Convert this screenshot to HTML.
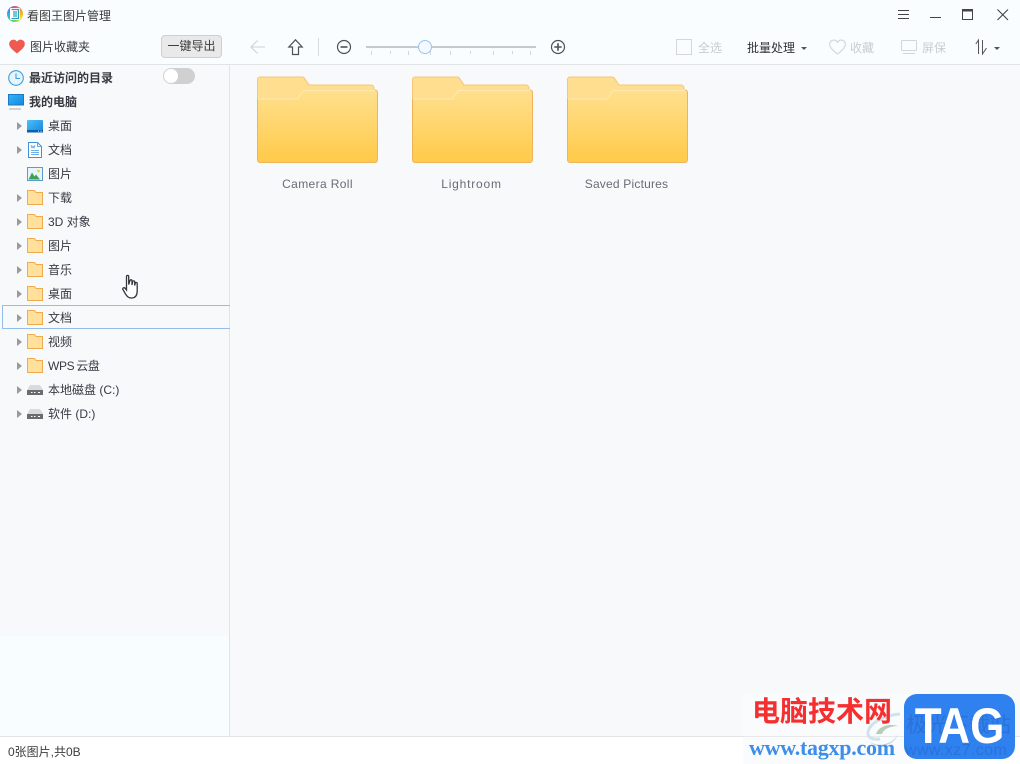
<!DOCTYPE html>
<html lang="zh">
<head>
<meta charset="utf-8">
<title>看图王图片管理</title>
<style>
html,body{margin:0;padding:0;}
body{width:1020px;height:764px;overflow:hidden;position:relative;background:#f9fdff;font-family:"Liberation Sans","Noto Sans CJK SC",sans-serif;font-size:12px;color:#333;}
.a{position:absolute;}
.t{position:absolute;white-space:nowrap;line-height:16px;font-size:12px;}
svg{position:absolute;overflow:visible;}
.row{position:absolute;left:0;width:229px;height:24px;}
.row .arr{position:absolute;left:17px;top:8px;width:0;height:0;border-left:5px solid #9a9a9a;border-top:4px solid transparent;border-bottom:4px solid transparent;}
.row .lb{position:absolute;left:48px;top:4px;line-height:16px;white-space:nowrap;color:#363b42;}
.row svg{left:27px;top:4px;}
.name{position:absolute;top:176px;width:121px;text-align:center;font-size:12px;line-height:16px;color:#666c75;}
.gr{color:#c9ccd0;}
</style>
</head>
<body>
<!-- backgrounds -->
<div class="a" style="left:0;top:65px;width:1020px;height:672px;background:#f8f9fb;"></div>
<div class="a" style="left:0;top:64px;width:1020px;height:1px;background:#e1e4e7;"></div>
<div class="a" style="left:0;top:636px;width:229px;height:100px;background:#f8fdff;"></div>
<div class="a" style="left:229px;top:65px;width:1px;height:671px;background:#dce5ea;"></div>
<div class="a" style="left:0;top:736px;width:1020px;height:28px;background:#fff;border-top:1px solid #e2e4e7;box-sizing:border-box;"></div>

<!-- title bar -->
<div class="a" style="left:7px;top:6px;width:16px;height:16px;border-radius:50%;background:conic-gradient(#f04a8a 0deg,#f5a623 70deg,#f7e02f 130deg,#55c66a 200deg,#25b5e8 270deg,#7a5fd8 320deg,#f04a8a 360deg);"></div>
<div class="a" style="left:10px;top:8px;width:10px;height:12px;background:#fff;border-radius:1px;"></div>
<svg width="10" height="12" style="left:10px;top:8px" viewBox="0 0 10 12"><path d="M1.500 1.500H8.500V10.500H1.500M3 4H7M3 6H7M3 8H7" fill="none" stroke="#2a9fb8" stroke-width="1.300"/></svg>
<div class="t" style="left:27px;top:8px;color:#3c3c3c;">看图王图片管理</div>

<svg width="12" height="10" style="left:898px;top:10px"><path d="M0 .5h11M0 4.500h11M0 8.500h11" stroke="#444" stroke-width="1"/></svg>
<svg width="12" height="3" style="left:930px;top:17px"><path d="M0 .5h11" stroke="#444" stroke-width="1"/></svg>
<svg width="13" height="12" style="left:961px;top:9px"><rect x="1.500" y=".5" width="10" height="10" fill="none" stroke="#444"/><path d="M1 1.500h11" stroke="#444" stroke-width="2"/></svg>
<svg width="12" height="12" style="left:997px;top:9px"><path d="M.5.500l10.500 10.500M11 .5L.5 11" stroke="#444" stroke-width="1.100"/></svg>

<!-- toolbar left -->
<svg width="17" height="15" style="left:9px;top:39px" viewBox="0 0 17 15"><path d="M8 14.500C3 10.500.2 8 .2 5A4.200 4.200 0 0 1 4.400 .6C6 .6 7.300 1.500 8 2.700 8.700 1.500 10 .6 11.600 .6A4.200 4.200 0 0 1 15.800 5C15.800 8 13 10.500 8 14.500Z" fill="#ee5a50"/></svg>
<div class="t" style="left:30px;top:39px;color:#3c3c3c;">图片收藏夹</div>
<div class="a" style="left:161px;top:35px;width:61px;height:23px;box-sizing:border-box;background:#e9e9e9;border:1px solid #cfcfcf;border-radius:4px;text-align:center;line-height:21px;color:#3c3c3c;">一键导出</div>

<!-- toolbar middle -->
<svg width="16" height="14" style="left:250px;top:40px"><path d="M15 7H1M7.500.500L1 7l6.500 6.500" fill="none" stroke="#cdd0d4" stroke-width="1"/></svg>
<svg width="16" height="17" style="left:288px;top:39px"><path d="M7.500.800L.800 8H4.500v7.500h6V8h3.700Z" fill="none" stroke="#4c5157" stroke-width="1.200"/></svg>
<div class="a" style="left:318px;top:38px;width:1px;height:18px;background:#d8dadd;"></div>
<svg width="16" height="16" style="left:336px;top:39px"><circle cx="8" cy="8" r="6.500" fill="none" stroke="#4c5157" stroke-width="1.200"/><path d="M4.500 8h7" stroke="#4c5157" stroke-width="1.600"/></svg>
<div class="a" style="left:366px;top:46px;width:170px;height:2px;background:#c8c9cb;"></div>
<svg width="170" height="6" style="left:366px;top:51px"><path d="M5.500 0v4M24.500 0v3M42.500 0v4M64.500 0v4M84.500 0v4M104.500 0v3M127.500 0v4M146.500 0v3M164.500 0v4" stroke="#d4d6d8" stroke-width="1"/></svg>
<div class="a" style="left:418px;top:40px;width:14px;height:14px;box-sizing:border-box;border-radius:50%;background:#f4f9ff;border:1px solid #9cc4ee;"></div>
<svg width="16" height="16" style="left:550px;top:39px"><circle cx="8" cy="8" r="6.500" fill="none" stroke="#4c5157" stroke-width="1.200"/><path d="M4.300 8h7.400M8 4.300v7.400" stroke="#4c5157" stroke-width="1.600"/></svg>

<!-- toolbar right -->
<div class="a" style="left:676px;top:39px;width:16px;height:16px;box-sizing:border-box;border:1px solid #d4d6d8;"></div>
<div class="t gr" style="left:698px;top:40px;">全选</div>
<div class="t" style="left:747px;top:40px;color:#333;">批量处理</div>
<div class="a" style="left:801px;top:47px;width:0;height:0;border-top:3px solid #555;border-left:3px solid transparent;border-right:3px solid transparent;"></div>
<svg width="17" height="16" style="left:829px;top:39px" viewBox="0 0 17 16"><path d="M8.500 15C3.500 11 .7 8.500.7 5.200A4 4 0 0 1 4.700 1.100C6.200 1.100 7.700 2 8.500 3.300 9.300 2 10.800 1.100 12.300 1.100A4 4 0 0 1 16.300 5.200C16.300 8.500 13.500 11 8.500 15Z" fill="none" stroke="#d2d4d7" stroke-width="1.100"/></svg>
<div class="t gr" style="left:850px;top:40px;">收藏</div>
<svg width="16" height="15" style="left:901px;top:40px"><rect x=".5" y=".5" width="15" height="10" rx="1" fill="none" stroke="#d2d4d7"/><path d="M2 13.500h12" stroke="#d2d4d7"/></svg>
<div class="t gr" style="left:922px;top:40px;">屏保</div>
<svg width="13" height="16" style="left:975px;top:39px"><path d="M3.500 15V1L.8 5M7.500 1v14l4-6" fill="none" stroke="#555" stroke-width="1"/></svg>
<div class="a" style="left:994px;top:47px;width:0;height:0;border-top:3px solid #555;border-left:3px solid transparent;border-right:3px solid transparent;"></div>

<!-- sidebar -->
<svg width="16" height="16" style="left:8px;top:70px"><circle cx="8" cy="8" r="7.300" fill="#e6f4fd" stroke="#3a9fe0" stroke-width="1.100"/><path d="M8 3.500V8.500H12" fill="none" stroke="#3a9fe0" stroke-width="1.100"/></svg>
<div class="t" style="left:29px;top:70px;font-weight:bold;color:#363b42;">最近访问的目录</div>
<div class="a" style="left:163px;top:68px;width:32px;height:16px;border-radius:8px;background:#d0d0d0;"></div>
<div class="a" style="left:164px;top:69px;width:14px;height:14px;border-radius:50%;background:#fff;"></div>

<svg width="16" height="16" style="left:8px;top:94px"><defs><linearGradient id="sc" x1="0" y1="0" x2="1" y2="1"><stop offset="0" stop-color="#35b4f5"/><stop offset="1" stop-color="#1288e0"/></linearGradient></defs><rect x=".5" y=".5" width="15" height="10.500" fill="url(#sc)" stroke="#1a78c5" stroke-width="1"/><rect x="1" y="14" width="12" height="2" fill="#d0d3d6"/></svg>
<div class="t" style="left:29px;top:94px;font-weight:bold;color:#363b42;">我的电脑</div>

<div class="row" style="top:114px"><i class="arr"></i>
<svg width="16" height="13" style="left:27px;top:6px"><defs><linearGradient id="dk" x1="0" y1="0" x2="1" y2="1"><stop offset="0" stop-color="#4cc0f8"/><stop offset="1" stop-color="#1285e0"/></linearGradient></defs><rect width="16" height="12.500" rx="1" fill="url(#dk)"/><rect y="10" width="16" height="2.500" fill="#0d5fa8"/><path d="M11 11.200h1M13.500 11.200h1" stroke="#fff" stroke-width=".8"/></svg>
<span class="lb">桌面</span></div>

<div class="row" style="top:138px"><i class="arr"></i>
<svg width="15" height="17" style="left:28px;top:4px"><path d="M.5.500H9.500L13.500 4.500V15.500H.5Z" fill="#fff" stroke="#3f93dd"/><path d="M9.500 .5V4.500h4M3 8.500h8M3 10.500h8M3 12.500h8" fill="none" stroke="#3f93dd" stroke-width=".8"/><path d="M3 3l1 3 1-2 1 2 1-3" fill="none" stroke="#3f93dd" stroke-width=".7"/></svg>
<span class="lb">文档</span></div>

<div class="row" style="top:162px">
<svg width="16" height="14" style="left:27px;top:5px"><rect x=".5" y=".5" width="15" height="13" fill="#e6f4fb" stroke="#5c9cc9"/><path d="M1.500 12.500L5 5.500l2.500 4 1.500-2 4 5Z" fill="#3f9e58"/><circle cx="11.500" cy="4" r="1.300" fill="#f5c33b"/></svg>
<span class="lb">图片</span></div>

<div class="row" style="top:186px"><i class="arr"></i><svg width="16" height="15" viewBox="0 0 16 15"><path d="M.5 14.500V.5H7.500L9 2.500H15.500V14.500Z" fill="#ffe19c" stroke="#f2aa51"/></svg><span class="lb">下载</span></div>
<div class="row" style="top:210px"><i class="arr"></i><svg width="16" height="15" viewBox="0 0 16 15"><path d="M.5 14.500V.5H7.500L9 2.500H15.500V14.500Z" fill="#ffe19c" stroke="#f2aa51"/></svg><span class="lb">3D 对象</span></div>
<div class="row" style="top:234px"><i class="arr"></i><svg width="16" height="15" viewBox="0 0 16 15"><path d="M.5 14.500V.5H7.500L9 2.500H15.500V14.500Z" fill="#ffe19c" stroke="#f2aa51"/></svg><span class="lb">图片</span></div>
<div class="row" style="top:258px"><i class="arr"></i><svg width="16" height="15" viewBox="0 0 16 15"><path d="M.5 14.500V.5H7.500L9 2.500H15.500V14.500Z" fill="#ffe19c" stroke="#f2aa51"/></svg><span class="lb">音乐</span></div>
<div class="row" style="top:282px"><i class="arr"></i><svg width="16" height="15" viewBox="0 0 16 15"><path d="M.5 14.500V.5H7.500L9 2.500H15.500V14.500Z" fill="#ffe19c" stroke="#f2aa51"/></svg><span class="lb">桌面</span></div>
<div class="a" style="left:2px;top:305px;width:228px;height:24px;box-sizing:border-box;border:1px solid #94bdea;border-right:none;"></div>
<div class="row" style="top:306px"><i class="arr"></i><svg width="16" height="15" viewBox="0 0 16 15"><path d="M.5 14.500V.5H7.500L9 2.500H15.500V14.500Z" fill="#ffe19c" stroke="#f2aa51"/></svg><span class="lb">文档</span></div>
<div class="row" style="top:330px"><i class="arr"></i><svg width="16" height="15" viewBox="0 0 16 15"><path d="M.5 14.500V.5H7.500L9 2.500H15.500V14.500Z" fill="#ffe19c" stroke="#f2aa51"/></svg><span class="lb">视频</span></div>
<div class="row" style="top:354px"><i class="arr"></i><svg width="16" height="15" viewBox="0 0 16 15"><path d="M.5 14.500V.5H7.500L9 2.500H15.500V14.500Z" fill="#ffe19c" stroke="#f2aa51"/></svg><span class="lb" style="word-spacing:-1px;letter-spacing:-.35px;">WPS 云盘</span></div>

<div class="row" style="top:378px"><i class="arr"></i>
<svg width="16" height="11" style="left:27px;top:7px"><path d="M3 0H13L16 5V10H0V5Z" fill="#d8dadc"/><rect y="5" width="16" height="5" fill="#6a6c6f"/><path d="M4 7.500h1.500M7 7.500h1.500M11 7.500h2" stroke="#fff" stroke-width="1"/></svg>
<span class="lb">本地磁盘&nbsp;(C:)</span></div>
<div class="row" style="top:402px"><i class="arr"></i>
<svg width="16" height="11" style="left:27px;top:7px"><path d="M3 0H13L16 5V10H0V5Z" fill="#d8dadc"/><rect y="5" width="16" height="5" fill="#6a6c6f"/><path d="M4 7.500h1.500M7 7.500h1.500M11 7.500h2" stroke="#fff" stroke-width="1"/></svg>
<span class="lb">软件&nbsp;(D:)</span></div>

<!-- cursor -->
<svg width="18" height="26" style="left:122px;top:274px" viewBox="0 0 18 26"><path d="M4.500 2.500C4.500 1 6.700 1 6.700 2.500V10.500L8 6.500C8.300 5.500 10 5.600 10 6.800V11L10.700 7.500C11 6.500 12.700 6.700 12.700 7.900V11.500L13.300 9C13.600 8.100 15.200 8.300 15.200 9.500V17C15.200 21 13.500 23.700 10 24 6.500 24.200 5.200 22.500 3.500 20L.9 15.500C.2 14.100 2 13.100 3.100 14.200L4.500 16Z" fill="#fff" stroke="#33383d" stroke-width="1.300"/></svg>

<!-- folders -->
<svg width="0" height="0" style="left:0;top:0"><defs>
<linearGradient id="fg" x1="0" y1="0" x2="0" y2="1"><stop offset="0" stop-color="#ffe08f"/><stop offset=".85" stop-color="#ffcd52"/><stop offset="1" stop-color="#ffcb4c"/></linearGradient>
</defs></svg>
<svg width="122" height="88" style="left:257px;top:76px" viewBox="0 0 122 88"><path d="M.5 3.500A2.500 2.500 0 0 1 3 1H45.500C46.500 1 47 1.500 47.500 2.300L52 9H114A3 3 0 0 1 117 12V30H.5Z" fill="#ffde90" stroke="#f4c77a"/><path d="M.5 23H40.500L46 14H118A2.500 2.500 0 0 1 120.500 16.500V84A2.500 2.500 0 0 1 118 86.500H3A2.500 2.500 0 0 1 .5 84Z" fill="url(#fg)"/><path d="M.5 23V84A2.500 2.500 0 0 0 3 86.500H118A2.500 2.500 0 0 0 120.500 84V16.500A2.500 2.500 0 0 0 118 14" fill="none" stroke="#eeb45c"/><path d="M1 23H40.500L46 14.500H118" fill="none" stroke="#ffeab0"/></svg>
<svg width="122" height="88" style="left:412px;top:76px" viewBox="0 0 122 88"><path d="M.5 3.500A2.500 2.500 0 0 1 3 1H45.500C46.500 1 47 1.500 47.500 2.300L52 9H114A3 3 0 0 1 117 12V30H.5Z" fill="#ffde90" stroke="#f4c77a"/><path d="M.5 23H40.500L46 14H118A2.500 2.500 0 0 1 120.500 16.500V84A2.500 2.500 0 0 1 118 86.500H3A2.500 2.500 0 0 1 .5 84Z" fill="url(#fg)"/><path d="M.5 23V84A2.500 2.500 0 0 0 3 86.500H118A2.500 2.500 0 0 0 120.500 84V16.500A2.500 2.500 0 0 0 118 14" fill="none" stroke="#eeb45c"/><path d="M1 23H40.500L46 14.500H118" fill="none" stroke="#ffeab0"/></svg>
<svg width="122" height="88" style="left:567px;top:76px" viewBox="0 0 122 88"><path d="M.5 3.500A2.500 2.500 0 0 1 3 1H45.500C46.500 1 47 1.500 47.500 2.300L52 9H114A3 3 0 0 1 117 12V30H.5Z" fill="#ffde90" stroke="#f4c77a"/><path d="M.5 23H40.500L46 14H118A2.500 2.500 0 0 1 120.500 16.500V84A2.500 2.500 0 0 1 118 86.500H3A2.500 2.500 0 0 1 .5 84Z" fill="url(#fg)"/><path d="M.5 23V84A2.500 2.500 0 0 0 3 86.500H118A2.500 2.500 0 0 0 120.500 84V16.500A2.500 2.500 0 0 0 118 14" fill="none" stroke="#eeb45c"/><path d="M1 23H40.500L46 14.500H118" fill="none" stroke="#ffeab0"/></svg>
<div class="name" style="left:257px;letter-spacing:.37px;">Camera Roll</div>
<div class="name" style="left:411px;letter-spacing:.8px;">Lightroom</div>
<div class="name" style="left:566px;letter-spacing:.2px;">Saved Pictures</div>

<!-- status -->
<div class="t" style="left:8px;top:744px;color:#3c3c3c;">0张图片,共0B</div>

<!-- watermark -->
<div class="a" style="left:743px;top:694px;width:170px;height:70px;background:#f9fbfd;opacity:.9;"></div>
<div class="a" style="left:743px;top:736px;width:170px;height:1px;background:#e6e8ea;"></div>
<svg width="40" height="40" style="left:864px;top:712px" viewBox="0 0 40 40"><path d="M36 2C22 3 6 10 4 20c-1 6 5 8 12 7" fill="none" stroke="#cfe3ee" stroke-width="3"/><path d="M12 22c2-7 12-11 22-8-6 0-14 2-16 8" fill="#b9ccb8"/><path d="M6 30c8 5 22 3 28-8-4 12-20 16-28 8Z" fill="#c5d9e8"/></svg>
<div class="t" style="left:752px;top:695px;font-size:28px;line-height:34px;font-weight:bold;color:#f52f2f;">电脑技术网</div>
<div class="t" style="left:749px;top:737px;font-family:'Liberation Serif',serif;font-size:22px;line-height:22px;font-weight:bold;color:#3d8ee8;letter-spacing:-.25px;">www.tagxp.com</div>
<div class="a" style="left:904px;top:694px;width:111px;height:65px;border-radius:13px;background:#2f81f0;"></div>
<div class="t" style="left:906px;top:714px;font-size:21px;line-height:24px;color:#2a72d8;">极光下载站</div>
<div class="t" style="left:905px;top:742px;font-size:16px;line-height:18px;color:#2a72d8;letter-spacing:.4px;">www.xz7.com</div>
<div class="t" style="left:904px;top:694px;width:111px;text-align:center;font-size:50px;line-height:64px;font-weight:bold;color:#fff;transform:scaleX(.88);">TAG</div>
</body>
</html>
